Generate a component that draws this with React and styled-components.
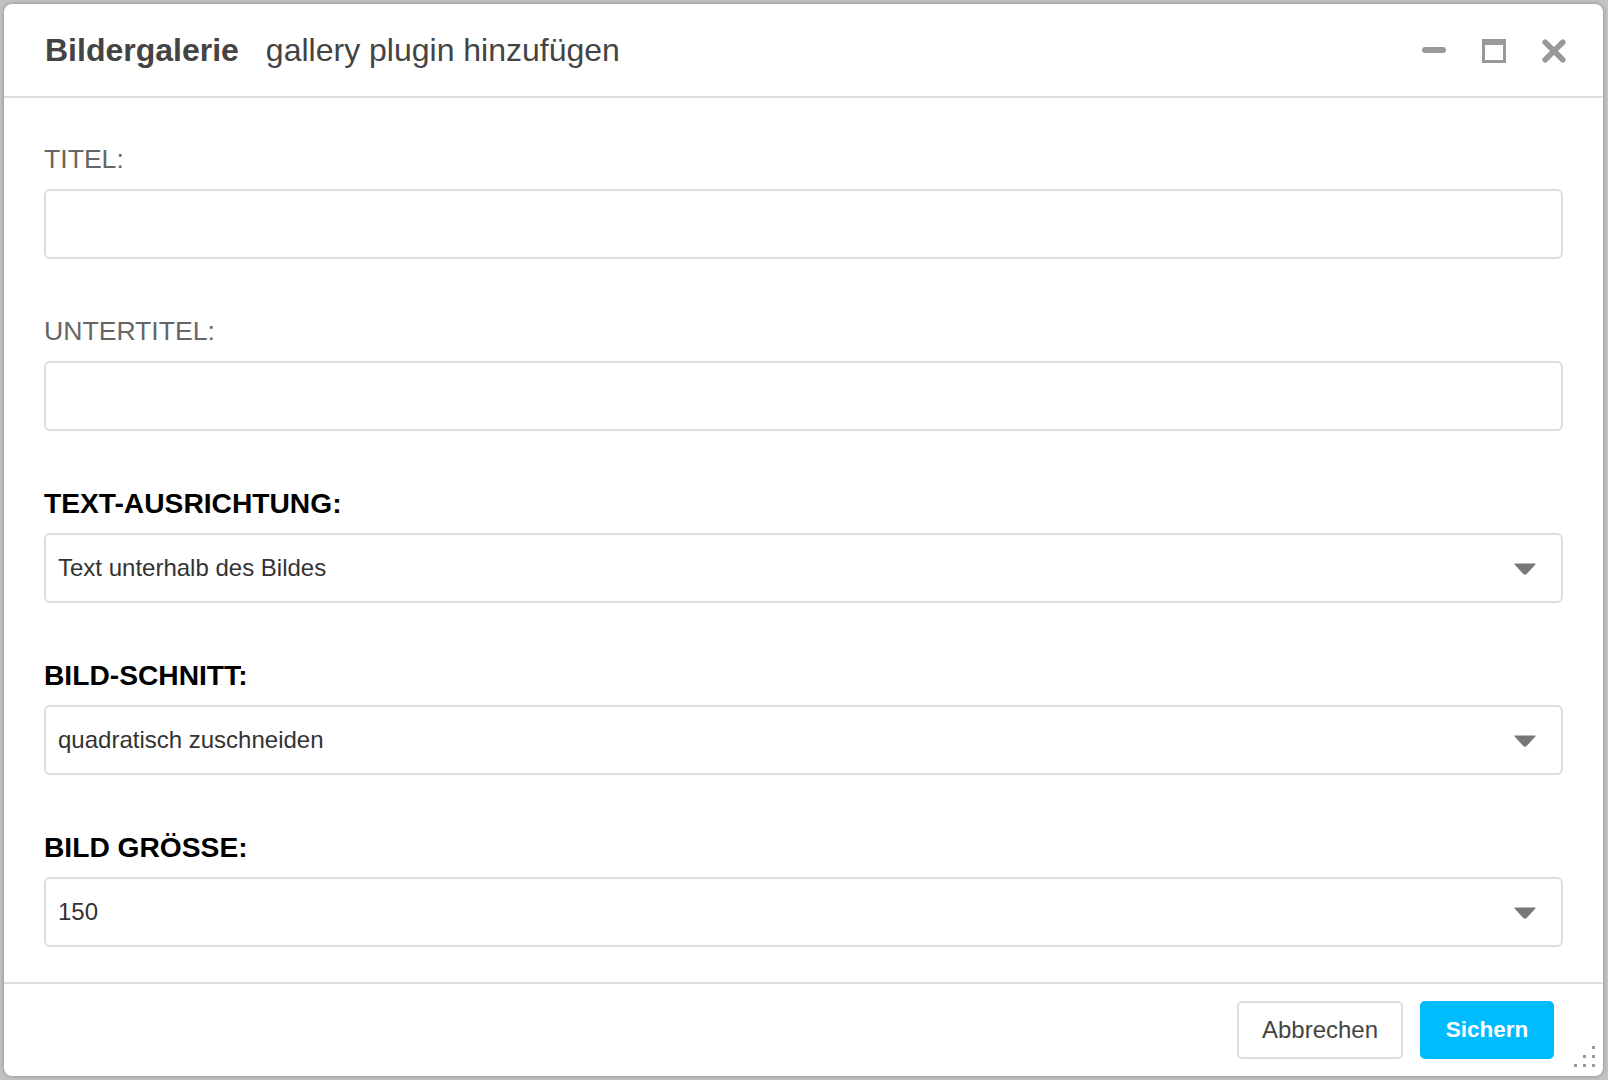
import React from 'react';
import styled, { createGlobalStyle } from 'styled-components';

const GlobalStyle = createGlobalStyle`
  html, body {
    margin: 0;
    padding: 0;
    background: #c4c4c4;
    font-family: "Liberation Sans", Arial, Helvetica, sans-serif;
  }
  * { box-sizing: border-box; }
`;

const fields = [
  { label: 'TITEL:', strong: false, type: 'input' },
  { label: 'UNTERTITEL:', strong: false, type: 'input' },
  { label: 'TEXT-AUSRICHTUNG:', strong: true, type: 'select', value: 'Text unterhalb des Bildes' },
  { label: 'BILD-SCHNITT:', strong: true, type: 'select', value: 'quadratisch zuschneiden' },
  { label: 'BILD GRÖSSE:', strong: true, type: 'select', value: '150' },
];

export default function App() {
  return (
    <>
      <GlobalStyle />
      <Page>
        <Dialog>
          <Header>
            <Title>
              <strong>Bildergalerie</strong>
              <span>gallery plugin hinzufügen</span>
            </Title>
            <WindowControls>
              <IconButton aria-label="minimieren">
                <svg width="24" height="24" viewBox="0 0 24 24">
                  <rect x="0" y="8" width="24" height="6" rx="3" fill="#999" />
                </svg>
              </IconButton>
              <IconButton aria-label="maximieren">
                <svg width="24" height="24" viewBox="0 0 24 24">
                  <path fillRule="evenodd" fill="#999" d="M0 0H24V24H0Z M3 6H21V21H3Z" />
                </svg>
              </IconButton>
              <IconButton aria-label="schließen">
                <svg width="24" height="24" viewBox="0 0 24 24">
                  <path d="M3.2 3.2L20.8 20.8M20.8 3.2L3.2 20.8" stroke="#999" strokeWidth="5.6" strokeLinecap="round" />
                </svg>
              </IconButton>
            </WindowControls>
          </Header>

          <Body>
            {fields.map((f) => (
              <Field key={f.label}>
                <Label $strong={f.strong}>{f.label}</Label>
                {f.type === 'input' ? (
                  <TextInput type="text" />
                ) : (
                  <Select>
                    <span>{f.value}</span>
                    <svg width="22" height="12" viewBox="0 0 22 12">
                      <path d="M1 1H21L12.2 10.6Q11 11.8 9.8 10.6Z" fill="#777" stroke="#777" strokeWidth="1.2" strokeLinejoin="round" />
                    </svg>
                  </Select>
                )}
              </Field>
            ))}
          </Body>

          <Footer>
            <Button>Abbrechen</Button>
            <Button $primary>Sichern</Button>
          </Footer>

          <Grip>
            <svg width="21" height="21" viewBox="0 0 21 21">
              <rect x="18" y="0" width="3" height="3" fill="#999" />
              <rect x="9" y="9" width="3" height="3" fill="#999" />
              <rect x="18" y="9" width="3" height="3" fill="#999" />
              <rect x="0" y="18" width="3" height="3" fill="#999" />
              <rect x="9" y="18" width="3" height="3" fill="#999" />
              <rect x="18" y="18" width="3" height="3" fill="#999" />
            </svg>
          </Grip>
        </Dialog>
      </Page>
    </>
  );
}

const Page = styled.div`
  width: 1608px;
  height: 1080px;
  padding: 4px 5px 4px 4px;
`;

const Dialog = styled.div`
  position: relative;
  width: 1599px;
  height: 1072px;
  background: #fff;
  border-radius: 8px;
  box-shadow: 0 0 5px rgba(0, 0, 0, 0.3);
  display: flex;
  flex-direction: column;
  overflow: hidden;
`;

const Header = styled.div`
  height: 94px;
  flex: none;
  display: flex;
  align-items: center;
  justify-content: space-between;
  padding: 0 37px 0 41px;
  border-bottom: 2px solid #e0e0e0;
`;

const Title = styled.div`
  font-size: 32px;
  color: #444;
  white-space: nowrap;
  strong {
    font-weight: bold;
  }
  span {
    margin-left: 27px;
  }
`;

const WindowControls = styled.div`
  display: flex;
  align-items: center;
  gap: 36px;
  margin-top: 2px;
`;

const IconButton = styled.div`
  width: 24px;
  height: 24px;
  display: flex;
  svg {
    display: block;
  }
`;

const Body = styled.div`
  flex: 1;
  display: flex;
  flex-direction: column;
  gap: 57px;
  padding: 46px 40px 35px 40px;
`;

const Field = styled.div`
  display: flex;
  flex-direction: column;
  gap: 15px;
`;

const Label = styled.div`
  height: 30px;
  line-height: 30px;
  font-size: ${(p) => (p.$strong ? '28.2px' : '26.6px')};
  font-weight: ${(p) => (p.$strong ? 'bold' : 'normal')};
  color: ${(p) => (p.$strong ? '#000' : '#666')};
`;

const TextInput = styled.input`
  display: block;
  width: 100%;
  height: 70px;
  margin: 0;
  border: 2px solid #dedede;
  border-radius: 6px;
  padding: 0 12px;
  font: inherit;
  font-size: 24px;
  color: #333;
  background: #fff;
  outline: none;
`;

const Select = styled.div`
  height: 70px;
  border: 2px solid #dedede;
  border-radius: 6px;
  padding: 0 25px 0 12px;
  display: flex;
  align-items: center;
  justify-content: space-between;
  font-size: 24px;
  color: #333;
  svg {
    display: block;
    margin-top: 1px;
  }
`;

const Footer = styled.div`
  height: 94px;
  flex: none;
  border-top: 2px solid #e0e0e0;
  display: flex;
  justify-content: flex-end;
  align-items: flex-start;
  gap: 17px;
  padding: 17px 49px 17px 0;
`;

const Button = styled.button`
  height: 58px;
  width: ${(p) => (p.$primary ? '134px' : '166px')};
  border-radius: 5px;
  border: 2px solid ${(p) => (p.$primary ? '#00bcfe' : '#dddddd')};
  background: ${(p) => (p.$primary ? '#00bcfe' : '#fff')};
  color: ${(p) => (p.$primary ? '#fff' : '#444')};
  font-family: "Liberation Sans", Arial, Helvetica, sans-serif;
  font-size: ${(p) => (p.$primary ? '22.5px' : '24px')};
  font-weight: ${(p) => (p.$primary ? 'bold' : 'normal')};
  padding: 0;
  cursor: pointer;
`;

const Grip = styled.div`
  position: absolute;
  right: 8px;
  bottom: 9px;
  svg {
    display: block;
  }
`;
